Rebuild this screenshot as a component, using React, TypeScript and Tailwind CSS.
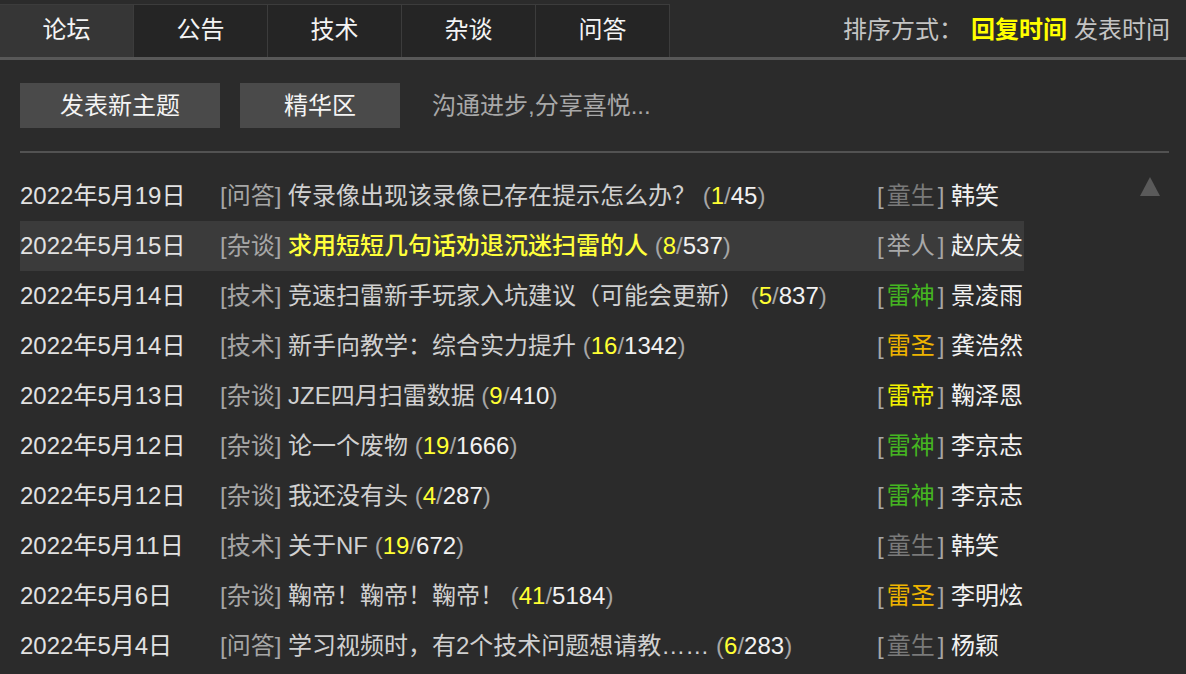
import React from "react";

type Topic = {
  date: string;
  cat: string;
  title: string;
  replies: number;
  views: number;
  rank: string;
  author: string;
  hot?: boolean;
};

const topics: Topic[] = [
  { date: "2022年5月19日", cat: "问答", title: "传录像出现该录像已存在提示怎么办？", replies: 1, views: 45, rank: "童生", author: "韩笑" },
  { date: "2022年5月15日", cat: "杂谈", title: "求用短短几句话劝退沉迷扫雷的人", replies: 8, views: 537, rank: "举人", author: "赵庆发", hot: true },
  { date: "2022年5月14日", cat: "技术", title: "竞速扫雷新手玩家入坑建议（可能会更新）", replies: 5, views: 837, rank: "雷神", author: "景凌雨" },
  { date: "2022年5月14日", cat: "技术", title: "新手向教学：综合实力提升", replies: 16, views: 1342, rank: "雷圣", author: "龚浩然" },
  { date: "2022年5月13日", cat: "杂谈", title: "JZE四月扫雷数据", replies: 9, views: 410, rank: "雷帝", author: "鞠泽恩" },
  { date: "2022年5月12日", cat: "杂谈", title: "论一个废物", replies: 19, views: 1666, rank: "雷神", author: "李京志" },
  { date: "2022年5月12日", cat: "杂谈", title: "我还没有头", replies: 4, views: 287, rank: "雷神", author: "李京志" },
  { date: "2022年5月11日", cat: "技术", title: "关于NF", replies: 19, views: 672, rank: "童生", author: "韩笑" },
  { date: "2022年5月6日", cat: "杂谈", title: "鞠帝！鞠帝！鞠帝！", replies: 41, views: 5184, rank: "雷圣", author: "李明炫" },
  { date: "2022年5月4日", cat: "问答", title: "学习视频时，有2个技术问题想请教……", replies: 6, views: 283, rank: "童生", author: "杨颖" },
];

const rankColor: Record<string, string> = {
  童生: "text-[#7a7a7a]",
  举人: "text-[#a8a8a8]",
  雷神: "text-[#45b521]",
  雷圣: "text-[#eeb400]",
  雷帝: "text-[#f2f200]",
};

const tabs = ["论坛", "公告", "技术", "杂谈", "问答"];

function TopicRow({ t }: { t: Topic }) {
  return (
    <div className={`flex h-[50px] items-center leading-none ${t.hot ? "bg-[#3b3b3b]" : ""}`}>
      <div className="w-[200px] shrink-0 text-[#e2e2e2]">{t.date}</div>
      <div className="flex-1 whitespace-nowrap">
        <span className="text-[#a6a6a6]">[{t.cat}]</span>{" "}
        <span className={t.hot ? "font-medium text-[#ffff3a]" : "text-[#d0d0d0]"}>{t.title}</span>{" "}
        <span className="text-[#a6a6a6]">(</span>
        <span className="font-medium text-[#ffff33]">{t.replies}</span>
        <span className="text-[#a6a6a6]">/</span>
        <span className="text-[#f2f2f2]">{t.views}</span>
        <span className="text-[#a6a6a6]">)</span>
      </div>
      <div className="w-[147px] shrink-0 whitespace-nowrap">
        <span className="text-[#a6a6a6]">[</span>
        <span className={`px-[3px] ${rankColor[t.rank]}`}>{t.rank}</span>
        <span className="text-[#a6a6a6]">]</span>{" "}
        <span className="text-[#f2f2f2]">{t.author}</span>
      </div>
    </div>
  );
}

export default function App() {
  return (
    <div
      className="relative h-[674px] w-[1186px] overflow-hidden bg-[#2b2b2b] text-[24px]"
      style={{ fontFamily: '"Liberation Sans", "Noto Sans CJK SC", sans-serif' }}
    >
      {/* Tabs + sort */}
      <div className="flex items-end border-b-[3px] border-[#585858] pt-[4px]">
        <div className="flex">
          {tabs.map((tab, i) => (
            <div
              key={tab}
              className={`flex h-[53px] w-[134px] items-center justify-center border-t border-r border-[#3c3c3c] pb-[2px] leading-none text-[#f4f4f4] ${
                i === 0 ? "bg-[#363636]" : "bg-[#252525]"
              }`}
            >
              {tab}
            </div>
          ))}
        </div>
        <div className="flex h-[53px] flex-1 items-center justify-end pr-[16px] pb-[2px] leading-none">
          <span className="text-[#c4c4c4]">排序方式：</span>{" "}
          <span className="ml-[8px] font-bold text-[#ffff00]">回复时间</span>
          <span className="ml-[7px] text-[#c4c4c4]">发表时间</span>
        </div>
      </div>

      <div className="pl-[20px] pr-[17px]">
        {/* Actions */}
        <div className="flex items-center gap-[20px] pt-[23px] pb-[23px] leading-none">
          <button className="h-[45px] w-[200px] bg-[#4a4a4a] text-[#f4f4f4]">发表新主题</button>
          <button className="h-[45px] w-[160px] bg-[#4a4a4a] text-[#f4f4f4]">精华区</button>
          <span className="ml-[12px] text-[#a8a8a8]">沟通进步,分享喜悦...</span>
        </div>
        <div className="h-[2px] bg-[#525252]" />

        {/* Topic list */}
        <div className="w-[1004px] pt-[18px]">
          {topics.map((t, i) => (
            <TopicRow key={i} t={t} />
          ))}
        </div>
      </div>

      {/* back to top */}
      <svg className="absolute left-[1140px] top-[177px]" width="20" height="19" viewBox="0 0 20 19">
        <polygon points="10,0 20,19 0,19" fill="#5a5a5a" />
      </svg>
    </div>
  );
}
